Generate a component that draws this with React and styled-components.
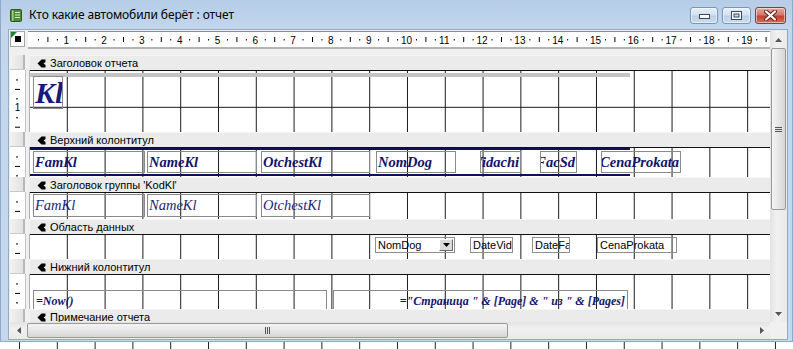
import React from 'react';
import styled, { createGlobalStyle } from 'styled-components';

const CM = 37.8;

const Global = createGlobalStyle`
  html, body { margin: 0; padding: 0; }
  body { width: 793px; height: 349px; overflow: hidden; background: #fff; font-family: "Liberation Sans", Arial, sans-serif; }
  #root { width: 793px; height: 349px; }
`;

const Screen = styled.div`
  width: 793px; height: 349px; display: flex; flex-direction: column; overflow: hidden; background: #fff;
`;

const Win = styled.div`
  height: 342px; flex: none; display: flex; flex-direction: column; box-sizing: border-box;
  background: linear-gradient(180deg, #b6cde7 0px, #c2d6ec 28px, #c5d9ee 100%);
  border-left: 1px solid #8ea9c9; border-right: 1px solid #8ea9c9; border-bottom: 1px solid #8ea9c9;
`;

const BottomStrip = styled.div`
  flex: 1;
  background-color: #fff;
  background-image: linear-gradient(90deg, transparent 0, transparent calc(100% - 1px), #222 calc(100% - 1px));
  background-size: 37.8px 100%;
  background-position: 20px 0;
`;

const TitleBar = styled.div`
  height: 29px; flex: none; display: flex; align-items: flex-start;
`;

const TitleText = styled.div`
  margin: 7px 0 0 7px; font-family: "Noto Sans", "Liberation Sans", sans-serif; font-size: 12px; line-height: 16px; color: #000;
  letter-spacing: -0.1px;
`;

const Spacer = styled.div` flex: 1; `;

const WinButtons = styled.div`
  display: flex; gap: 4px; margin: 7px 6px 0 0;
`;

const WinBtn = styled.div`
  width: ${p => p.$w}px; height: 17px; box-sizing: border-box; border-radius: 3px;
  border: 1px solid ${p => (p.$close ? '#8a3b32' : '#7895bb')};
  background: ${p => (p.$close
    ? 'linear-gradient(180deg, #e9a89c 0%, #d47a68 45%, #c2432f 55%, #d2705c 100%)'
    : 'linear-gradient(180deg, #e8f0f9 0%, #d3e1f1 45%, #bdd0e8 55%, #cadcef 100%)')};
  box-shadow: inset 0 0 0 1px rgba(255,255,255,0.5);
  display: flex; align-items: center; justify-content: center;
`;

const Client = styled.div`
  flex: 1; margin: 0 4px 1px 7px; border: 1px solid #94a9c3; background: #f0f0f0;
  display: grid; grid-template-columns: 1fr 17px; grid-template-rows: 1fr 17px; overflow: hidden;
`;

const Main = styled.div`
  display: flex; flex-direction: column; overflow: hidden; min-height: 0;
`;

const RulerRow = styled.div`
  height: 25px; flex: none; display: flex; align-items: flex-start; padding-top: 1px; box-sizing: border-box;
`;

const Corner = styled.div`
  margin-left: 1px; width: 15px; height: 16px; box-sizing: border-box; position: relative;
  background: #fff; border: 1px solid #a8a8a8; display: flex; align-items: center; justify-content: center;
`;

const CornerSquare = styled.div` width: 6px; height: 6px; background: #000; `;

const CornerTri = styled.div`
  position: absolute; left: 0; top: 0; width: 0; height: 0;
  border-top: 6px solid #0a8a2a; border-right: 6px solid transparent;
`;

const HRulerBox = styled.div`
  margin-left: 3px; flex: 1; height: 18px; background: #fff; box-sizing: border-box; overflow: hidden;
  border-top: 1px solid #8c8c8c; border-bottom: 2px solid #b4b4b4;
`;

const SectionRow = styled.div`
  display: grid; grid-template-columns: 21px 1fr; flex: none;
`;

const Handle = styled.div`
  margin-left: 1px; width: 15px; height: 15px; box-sizing: border-box;
  background: linear-gradient(90deg, #f2f2f2, #e2e2e2);
  border-right: 2px solid #b8b8b8; border-bottom: 1px solid #c8c8c8;
`;

const LeftBody = styled.div`
  height: ${p => p.$h}px; display: flex;
  border-right: 1px solid #b0b0b0; box-sizing: border-box;
`;

const VRulerBox = styled.div`
  margin-left: 1px; width: 15px; height: 100%; background: #fff; border-right: 1px solid #c4c4c4;
`;

const SectionBar = styled.div`
  height: 15px; background: #ebebeb; display: flex; align-items: center; gap: 4px; padding-left: 7px;
  font-size: 11px; color: #000; white-space: nowrap; box-sizing: border-box;
  border-top: 1px solid #f6f6f6;
`;

const Canvas = styled.div`
  position: relative; height: ${p => p.$h}px; box-sizing: border-box; overflow: hidden;
  border-top: 1px solid #111;
  background-color: #fff;
  background-image:
    linear-gradient(90deg, transparent 0, transparent calc(100% - 1px), #1a1a1a calc(100% - 1px)),
    linear-gradient(180deg, transparent 0, transparent calc(100% - 1px), #1a1a1a calc(100% - 1px));
  background-size: 37.8px 100%, 100% 37.8px;
  background-position: 0 0, 0 -1px;
`;

const Label = styled.div`
  position: absolute; box-sizing: border-box; overflow: hidden; white-space: nowrap;
  border: 1px solid #8a8a8a; display: flex; align-items: center;
  justify-content: ${p => (p.$end ? 'flex-end' : 'flex-start')};
  padding: 0 1px;
  font-family: "Liberation Serif", "Times New Roman", serif; font-style: italic;
  font-weight: ${p => (p.$bold ? 700 : 400)}; font-size: ${p => p.$fs || 14}px;
  color: ${p => p.$color || '#12126a'};
`;

const TextBox = styled.div`
  position: absolute; box-sizing: border-box; overflow: hidden; white-space: nowrap;
  border: 1px solid #8f8f8f; display: flex; align-items: center; padding-left: 2px;
  font-size: 11px; color: #000; background: transparent;
`;

const DropBtn = styled.div`
  position: absolute; right: 1px; top: 1px; width: 14px; height: 12px; box-sizing: border-box;
  background: #dcdcdc; border: 1px solid; border-color: #fff #6b6b6b #6b6b6b #fff;
  display: flex; align-items: center; justify-content: center;
`;

const Line = styled.div`
  position: absolute; left: 0; height: ${p => p.$h}px; width: ${p => p.$w}px; background: ${p => p.$c};
`;

const FooterBox = styled.div`
  position: absolute; box-sizing: border-box; height: 26px; border: 1px solid #8a8a8a; border-bottom: none;
  display: flex; align-items: center; justify-content: ${p => (p.$end ? 'flex-end' : 'flex-start')};
  padding: 0 2px 4px 2px; white-space: nowrap; overflow: hidden;
  font-family: "Liberation Serif", "Times New Roman", serif; font-style: italic; font-weight: 700;
  font-size: 12px; color: #14146e;
`;

const VScroll = styled.div`
  grid-column: 2; grid-row: 1; display: flex; flex-direction: column; padding-top: 1px;
  background: linear-gradient(90deg, #e3e3e3, #f1f1f1 40%, #e9e9e9);
`;

const HScroll = styled.div`
  grid-column: 1; grid-row: 2; display: flex; align-items: stretch; margin-left: 1px;
  background: linear-gradient(180deg, #e3e3e3, #f1f1f1 40%, #e9e9e9);
`;

const SizeBox = styled.div` grid-column: 2; grid-row: 2; background: #f0f0f0; `;

const Arrow = styled.div`
  width: 17px; height: 17px; flex: none; display: flex; align-items: center; justify-content: center;
`;

const VThumb = styled.div`
  margin: ${p => p.$top}px 1px 0 1px; height: ${p => p.$h}px; box-sizing: border-box;
  border: 1px solid #9a9a9a; border-radius: 2px;
  background: linear-gradient(90deg, #f4f4f4, #e6e6e6 50%, #d6d6d6);
  display: flex; align-items: center; justify-content: center;
`;

const HThumb = styled.div`
  margin: 1px 0 1px 0; width: ${p => p.$w}px; box-sizing: border-box;
  border: 1px solid #9a9a9a; border-radius: 2px;
  background: linear-gradient(180deg, #f4f4f4, #e6e6e6 50%, #d6d6d6);
  display: flex; align-items: center; justify-content: center;
`;

const Track = styled.div` flex: 1; `;

function TitleIcon() {
  return (
    <svg width="12" height="13" viewBox="0 0 12 13" style={{ marginTop: 9, marginLeft: 9 }}>
      <rect x="0.5" y="0.5" width="11" height="12" rx="1" fill="#4f8a3a" stroke="#2d5a20" />
      <rect x="2" y="1.5" width="1.5" height="10" fill="#a8d18a" />
      <rect x="5" y="3" width="5" height="1" fill="#d9efc7" />
      <rect x="5" y="5.5" width="5" height="1" fill="#d9efc7" />
      <rect x="5" y="8" width="5" height="1" fill="#d9efc7" />
    </svg>
  );
}

function MinGlyph() {
  return (
    <svg width="11" height="6" viewBox="0 0 11 6">
      <rect x="0.5" y="1.5" width="10" height="4" fill="#fff" stroke="#34495e" />
    </svg>
  );
}
function MaxGlyph() {
  return (
    <svg width="11" height="9" viewBox="0 0 11 9">
      <rect x="0.5" y="0.5" width="10" height="8" fill="#fff" stroke="#34495e" />
      <rect x="3" y="3" width="5" height="3" fill="#c8d8ec" stroke="#34495e" strokeWidth="1" />
    </svg>
  );
}
function CloseGlyph() {
  return (
    <svg width="13" height="11" viewBox="0 0 13 11">
      <path d="M2 1.5 L11 9.5 M11 1.5 L2 9.5" stroke="#5a1e18" strokeWidth="4" strokeLinecap="round" />
      <path d="M2 1.5 L11 9.5 M11 1.5 L2 9.5" stroke="#fff" strokeWidth="2.2" strokeLinecap="round" />
    </svg>
  );
}

function Pointer() {
  return (
    <svg width="9" height="9" viewBox="0 0 9 9">
      <path d="M0.5 4.5 L4.5 0.5 L8.5 0.5 L8.5 3 L6.5 4.5 L8.5 6 L8.5 8.5 L4.5 8.5 Z" fill="#000" />
    </svg>
  );
}

function HRuler() {
  const items = [];
  const o = 0.5;
  for (let n = 0; n < 20; n++) {
    const b = o + n * CM;
    items.push(<rect key={`a${n}`} x={b + CM * 0.25} y={7} width={1} height={1.5} fill="#000" />);
    items.push(<rect key={`b${n}`} x={b + CM * 0.5} y={5} width={1} height={5} fill="#000" />);
    items.push(<rect key={`c${n}`} x={b + CM * 0.75} y={7} width={1} height={1.5} fill="#000" />);
    if (n < 19) {
      items.push(
        <text key={`t${n}`} x={b + CM} y={12} fontSize="10" textAnchor="middle" fontFamily="Liberation Sans, Arial, sans-serif" fill="#000">
          {n + 1}
        </text>
      );
    }
  }
  return (
    <svg width="741" height="15" style={{ display: 'block' }}>
      {items}
    </svg>
  );
}

function VRuler({ h }) {
  const items = [];
  for (let n = 0; n < 3; n++) {
    const b = n * CM;
    if (b + CM * 0.25 < h) items.push(<rect key={`a${n}`} x={6} y={b + CM * 0.25} width={2} height={1} fill="#000" />);
    if (b + CM * 0.5 < h) items.push(<rect key={`b${n}`} x={5} y={b + CM * 0.5} width={5} height={1} fill="#000" />);
    if (b + CM * 0.75 < h) items.push(<rect key={`c${n}`} x={6} y={b + CM * 0.75} width={2} height={1} fill="#000" />);
    if (b + CM < h - 4)
      items.push(
        <text key={`t${n}`} x={7.5} y={b + CM + 3.5} fontSize="10" textAnchor="middle" fontFamily="Liberation Sans, Arial, sans-serif" fill="#000">
          {n + 1}
        </text>
      );
  }
  return (
    <svg width="15" height={h} style={{ display: 'block' }}>
      {items}
    </svg>
  );
}

function DownTri({ color = '#000' }) {
  return (
    <svg width="7" height="4" viewBox="0 0 7 4">
      <path d="M0 0 H7 L3.5 4 Z" fill={color} />
    </svg>
  );
}

function Section({ title, h, children }) {
  return (
    <>
      <SectionRow>
        <Handle />
        <SectionBar>
          <Pointer />
          <span>{title}</span>
        </SectionBar>
      </SectionRow>
      <SectionRow>
        <LeftBody $h={h}>
          <VRulerBox>
            <VRuler h={h} />
          </VRulerBox>
        </LeftBody>
        <Canvas $h={h}>{children}</Canvas>
      </SectionRow>
    </>
  );
}

const pageHeader = [
  { t: 'FamKl', l: 3, w: 112 },
  { t: 'NameKl', l: 117, w: 110 },
  { t: 'OtchestKl', l: 231, w: 109 },
  { t: 'NomDog', l: 346, w: 80 },
  { t: 'Vidachi', l: 450, w: 41, end: true },
  { t: 'FacSd', l: 510, w: 37, end: true },
  { t: 'CenaProkata', l: 571, w: 80, end: true },
];

const groupHeader = [
  { t: 'FamKl', l: 3, w: 112 },
  { t: 'NameKl', l: 117, w: 110 },
  { t: 'OtchestKl', l: 231, w: 109 },
];

const detail = [
  { t: 'DateVid', l: 440, w: 43 },
  { t: 'DateFa', l: 502, w: 38 },
  { t: 'CenaProkata', l: 567, w: 80 },
];

export default function App() {
  return (
    <Screen>
      <Global />
      <Win>
        <TitleBar>
          <TitleIcon />
          <TitleText>Кто какие автомобили берёт : отчет</TitleText>
          <Spacer />
          <WinButtons>
            <WinBtn $w={28}><MinGlyph /></WinBtn>
            <WinBtn $w={29}><MaxGlyph /></WinBtn>
            <WinBtn $w={31} $close><CloseGlyph /></WinBtn>
          </WinButtons>
        </TitleBar>
        <Client>
          <Main>
            <RulerRow>
              <Corner>
                <CornerTri />
                <CornerSquare />
              </Corner>
              <HRulerBox>
                <HRuler />
              </HRulerBox>
            </RulerRow>

            <Section title="Заголовок отчета" h={62}>
              <Line $c="#c4c4c4" $h={4} $w={600} style={{ top: 2 }} />
              <Label $bold $fs={30} $color="#18187e" style={{ left: 3, top: 5, width: 30, height: 33 }}>Kl</Label>
            </Section>

            <Section title="Верхний колонтитул" h={30}>
              <Line $c="#10105a" $h={2} $w={600} style={{ top: 0 }} />
              <Line $c="#10105a" $h={2} $w={600} style={{ top: 26 }} />
              {pageHeader.map(c => (
                <Label key={c.t} $bold $fs={14.5} $end={c.end} style={{ left: c.l, top: 3, width: c.w, height: 22 }}>{c.t}</Label>
              ))}
            </Section>

            <Section title="Заголовок группы 'KodKl'" h={27}>
              {groupHeader.map(c => (
                <Label key={c.t} $fs={14.5} $color="#1e1e7c" style={{ left: c.l, top: 1, width: c.w, height: 23 }}>{c.t}</Label>
              ))}
            </Section>

            <Section title="Область данных" h={25}>
              <TextBox style={{ left: 345, top: 2, width: 80, height: 16 }}>
                NomDog
                <DropBtn><DownTri /></DropBtn>
              </TextBox>
              {detail.map(c => (
                <TextBox key={c.t} style={{ left: c.l, top: 2, width: c.w, height: 16 }}>{c.t}</TextBox>
              ))}
            </Section>

            <Section title="Нижний колонтитул" h={35}>
              <FooterBox style={{ left: 3, top: 15, width: 294 }}>=Now()</FooterBox>
              <FooterBox $end style={{ left: 303, top: 15, width: 295 }}>="Страница " &amp; [Page] &amp; " из " &amp; [Pages]</FooterBox>
            </Section>

            <Section title="Примечание отчета" h={20} />
          </Main>

          <VScroll>
            <Arrow>
              <svg width="7" height="4" viewBox="0 0 7 4"><path d="M0 4 H7 L3.5 0 Z" fill="#555" /></svg>
            </Arrow>
            <VThumb $top={0} $h={162}>
              <svg width="7" height="5" viewBox="0 0 7 5">
                <rect x="0" y="0" width="7" height="1" fill="#555" />
                <rect x="0" y="2" width="7" height="1" fill="#555" />
                <rect x="0" y="4" width="7" height="1" fill="#555" />
              </svg>
            </VThumb>
            <Track />
            <Arrow>
              <DownTri color="#555" />
            </Arrow>
          </VScroll>

          <HScroll>
            <Arrow>
              <svg width="4" height="7" viewBox="0 0 4 7"><path d="M4 0 V7 L0 3.5 Z" fill="#555" /></svg>
            </Arrow>
            <HThumb $w={481}>
              <svg width="5" height="7" viewBox="0 0 5 7">
                <rect x="0" y="0" width="1" height="7" fill="#555" />
                <rect x="2" y="0" width="1" height="7" fill="#555" />
                <rect x="4" y="0" width="1" height="7" fill="#555" />
              </svg>
            </HThumb>
            <Track />
            <Arrow>
              <svg width="4" height="7" viewBox="0 0 4 7"><path d="M0 0 V7 L4 3.5 Z" fill="#555" /></svg>
            </Arrow>
          </HScroll>
          <SizeBox />
        </Client>
      </Win>
      <BottomStrip />
    </Screen>
  );
}
